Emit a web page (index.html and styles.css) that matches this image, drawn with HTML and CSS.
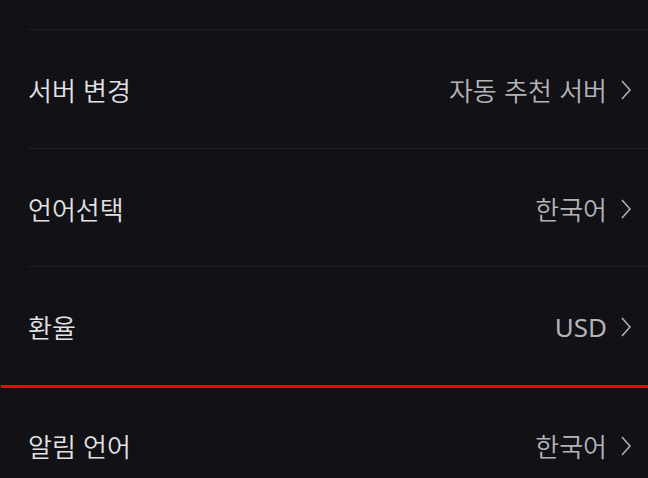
FILE: index.html
```html
<!DOCTYPE html>
<html lang="ko">
<head>
<meta charset="utf-8">
<title>설정</title>
<link rel="stylesheet" href="styles.css">
</head>
<body>
<div class="list">
  <div class="top-spacer"></div>
  <div class="row">
    <span class="label">서버 변경</span>
    <span class="value">자동 추천 서버
      <svg class="chev" viewBox="0 0 10 20" aria-hidden="true"><polyline points="1,1 9,10 1,19"/></svg>
    </span>
  </div>
  <div class="row">
    <span class="label">언어선택</span>
    <span class="value">한국어
      <svg class="chev" viewBox="0 0 10 20" aria-hidden="true"><polyline points="1,1 9,10 1,19"/></svg>
    </span>
  </div>
  <div class="row">
    <span class="label">환율</span>
    <span class="value"><span class="latin">USD</span>
      <svg class="chev" viewBox="0 0 10 20" aria-hidden="true"><polyline points="1,1 9,10 1,19"/></svg>
    </span>
  </div>
  <div class="row marked">
    <span class="label">알림 언어</span>
    <span class="value">한국어
      <svg class="chev" viewBox="0 0 10 20" aria-hidden="true"><polyline points="1,1 9,10 1,19"/></svg>
    </span>
  </div>
</div>
</body>
</html>
```
FILE: styles.css
```css
html, body {
  margin: 0;
  padding: 0;
  background: #111116;
}
body {
  font-family: "Noto Sans CJK KR", "Noto Sans", sans-serif;
  font-weight: 350;
  overflow: hidden;
  height: 478px;
}
.list {
  display: flex;
  flex-direction: column;
}
.top-spacer {
  height: 29px;
}
.row {
  position: relative;
  box-sizing: border-box;
  height: 118.5px;
  margin-left: 28px;
  padding-right: 17px;
  padding-top: 3px;
  border-top: 1px solid #1f1f24;
  display: flex;
  align-items: center;
  justify-content: space-between;
}
.label {
  color: #e2e2e4;
  font-size: 26px;
  line-height: 1;
}
.value {
  display: flex;
  align-items: center;
  gap: 14px;
  color: #b4b4b8;
  font-size: 26px;
  line-height: 1;
}
.latin {
  font-family: "Noto Sans", sans-serif;
  font-weight: 400;
  font-size: 26px;
}
.chev {
  width: 10px;
  height: 20px;
  fill: none;
  stroke: #b4b4b8;
  stroke-width: 1.5;
}
.marked {
  border-top-color: transparent;
}
.marked::before {
  content: "";
  position: absolute;
  left: -27px;
  right: 0;
  top: -1px;
  height: 3px;
  background: #ff0000;
}
```
